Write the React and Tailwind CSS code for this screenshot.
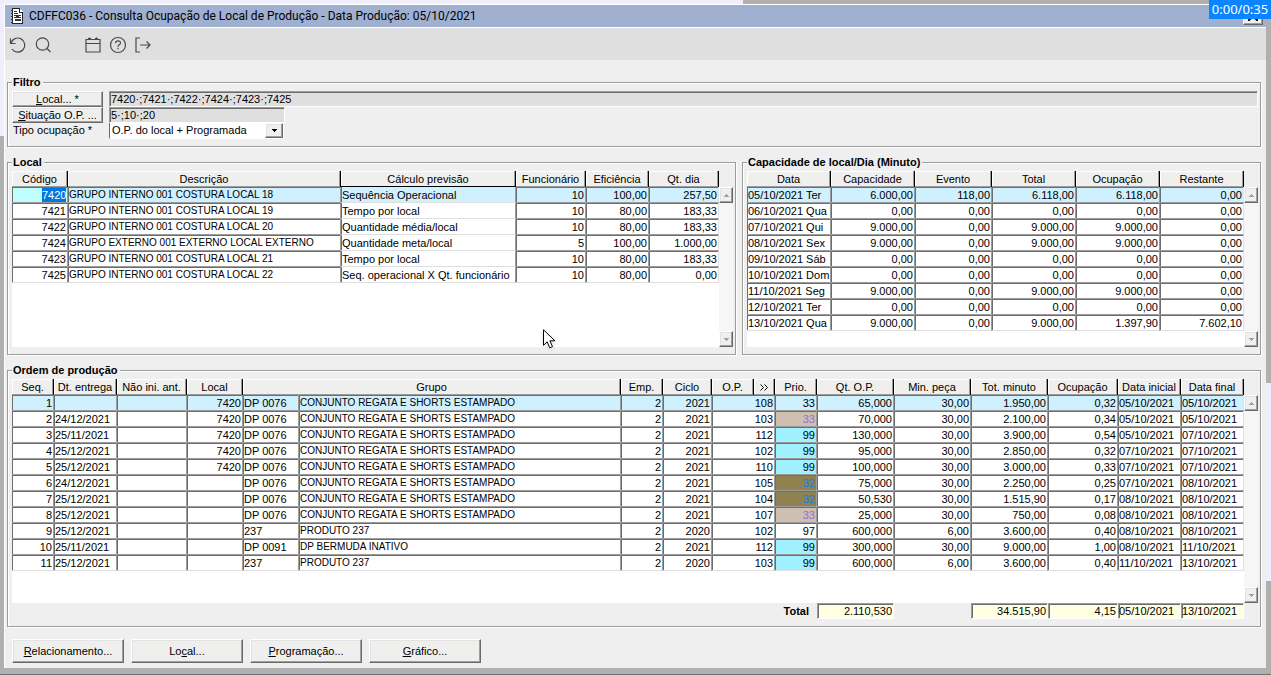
import React from 'react';
import clsx from 'clsx';

const locais = [
  ['7420', 'GRUPO INTERNO 001 COSTURA LOCAL 18', 'Sequência Operacional', '10', '100,00', '257,50'],
  ['7421', 'GRUPO INTERNO 001 COSTURA LOCAL 19', 'Tempo por local', '10', '80,00', '183,33'],
  ['7422', 'GRUPO INTERNO 001 COSTURA LOCAL 20', 'Quantidade média/local', '10', '80,00', '183,33'],
  ['7424', 'GRUPO EXTERNO 001 EXTERNO LOCAL EXTERNO', 'Quantidade meta/local', '5', '100,00', '1.000,00'],
  ['7423', 'GRUPO INTERNO 001 COSTURA LOCAL 21', 'Tempo por local', '10', '80,00', '183,33'],
  ['7425', 'GRUPO INTERNO 001 COSTURA LOCAL 22', 'Seq. operacional X Qt. funcionário', '10', '80,00', '0,00'],
];

const capacidades = [
  ['05/10/2021 Ter', '6.000,00', '118,00', '6.118,00', '6.118,00', '0,00'],
  ['06/10/2021 Qua', '0,00', '0,00', '0,00', '0,00', '0,00'],
  ['07/10/2021 Qui', '9.000,00', '0,00', '9.000,00', '9.000,00', '0,00'],
  ['08/10/2021 Sex', '9.000,00', '0,00', '9.000,00', '9.000,00', '0,00'],
  ['09/10/2021 Sáb', '0,00', '0,00', '0,00', '0,00', '0,00'],
  ['10/10/2021 Dom', '0,00', '0,00', '0,00', '0,00', '0,00'],
  ['11/10/2021 Seg', '9.000,00', '0,00', '9.000,00', '9.000,00', '0,00'],
  ['12/10/2021 Ter', '0,00', '0,00', '0,00', '0,00', '0,00'],
  ['13/10/2021 Qua', '9.000,00', '0,00', '9.000,00', '1.397,90', '7.602,10'],
];

const regata = 'CONJUNTO REGATA E SHORTS ESTAMPADO';

const ordens = [
  ['1', '', '', '7420', 'DP 0076', regata, '2', '2021', '108', '33', '65,000', '30,00', '1.950,00', '0,32', '05/10/2021', '05/10/2021'],
  ['2', '24/12/2021', '', '7420', 'DP 0076', regata, '2', '2021', '103', '33', '70,000', '30,00', '2.100,00', '0,34', '05/10/2021', '05/10/2021'],
  ['3', '25/11/2021', '', '7420', 'DP 0076', regata, '2', '2021', '112', '99', '130,000', '30,00', '3.900,00', '0,54', '05/10/2021', '07/10/2021'],
  ['4', '25/12/2021', '', '7420', 'DP 0076', regata, '2', '2021', '102', '99', '95,000', '30,00', '2.850,00', '0,32', '07/10/2021', '07/10/2021'],
  ['5', '25/12/2021', '', '7420', 'DP 0076', regata, '2', '2021', '110', '99', '100,000', '30,00', '3.000,00', '0,33', '07/10/2021', '07/10/2021'],
  ['6', '24/12/2021', '', '', 'DP 0076', regata, '2', '2021', '105', '32', '75,000', '30,00', '2.250,00', '0,25', '07/10/2021', '08/10/2021'],
  ['7', '25/12/2021', '', '', 'DP 0076', regata, '2', '2021', '104', '32', '50,530', '30,00', '1.515,90', '0,17', '08/10/2021', '08/10/2021'],
  ['8', '25/12/2021', '', '', 'DP 0076', regata, '2', '2021', '107', '33', '25,000', '30,00', '750,00', '0,08', '08/10/2021', '08/10/2021'],
  ['9', '25/12/2021', '', '', '237', 'PRODUTO 237', '2', '2020', '102', '97', '600,000', '6,00', '3.600,00', '0,40', '08/10/2021', '08/10/2021'],
  ['10', '25/11/2021', '', '', 'DP 0091', 'DP BERMUDA INATIVO', '2', '2021', '112', '99', '300,000', '30,00', '9.000,00', '1,00', '08/10/2021', '11/10/2021'],
  ['11', '25/12/2021', '', '', '237', 'PRODUTO 237', '2', '2020', '103', '99', '600,000', '6,00', '3.600,00', '0,40', '11/10/2021', '13/10/2021'],
];

// Cor da célula de prioridade
const prioridadeCores = {
  32: 'bg-[#8f8150] text-[#0a84e8]',
  33: 'bg-[#cfbfb0] text-[#9070d8]',
  99: 'bg-[#a0f0ff]',
};

const Group = ({ title, className, children }) => (
  <fieldset
    className={clsx(
      'min-w-0 border border-[#9c9c9c] pl-1 pr-0.5 pt-px pb-[7px] shadow-[1px_1px_0_#fff,inset_1px_1px_0_#fff]',
      className
    )}
  >
    <legend className="h-4 bg-[#efefef] pr-0.5 pl-px text-[11px] leading-4 font-bold">{title}</legend>
    {children}
  </fieldset>
);

const bevel =
  'border border-t-white border-l-white border-r-[#696969] border-b-[#696969] bg-[#efefee] shadow-[inset_-1px_-1px_0_#a0a0a0,inset_1px_1px_0_#e3e3e3]';

const sunken =
  'border border-t-[#9c9c9c] border-l-[#9c9c9c] border-r-white border-b-white shadow-[inset_1px_1px_0_#6d6d6d]';

const Arrow = ({ up, className }) => (
  <svg viewBox="0 0 5 3" className={clsx('h-[3px] w-[5px]', className)} fill="currentColor" shapeRendering="crispEdges">
    <path d={up ? 'M2 0h1v1h1v1h1v1H0V2h1V1h1z' : 'M0 0h5v1H4v1H3v1H2V2H1V1H0z'} />
  </svg>
);

const ScrollBar = () => (
  <div className="mt-4 flex w-[14px] shrink-0 flex-col justify-between bg-[#f6f6f6]">
    <button type="button" aria-label="Rolar para cima" className={clsx('flex h-4 w-full items-center justify-center', bevel)}>
      <Arrow up className="text-[#a0a0a0]" />
    </button>
    <button type="button" aria-label="Rolar para baixo" className={clsx('flex h-4 w-full items-center justify-center', bevel)}>
      <Arrow className="text-[#a0a0a0]" />
    </button>
  </div>
);

const Th = ({ children, colSpan, active }) => (
  <th
    scope="col"
    colSpan={colSpan}
    className={clsx(
      'h-4 overflow-hidden border-r border-r-black bg-[#efefee] p-0 text-center leading-4 font-normal whitespace-nowrap',
      active
        ? 'shadow-[inset_0_-1px_0_#000,inset_-1px_0_0_#9c9c9c,inset_1px_1px_0_#fff]'
        : 'shadow-[inset_-1px_-1px_0_#9c9c9c,inset_1px_1px_0_#fff]'
    )}
  >
    {children}
  </th>
);

const Td = ({ children, right, combo, colSpan, className }) => (
  <td
    colSpan={colSpan}
    className={clsx(
      'h-4 overflow-hidden border-r border-b border-r-[#9c9c9c] pt-px pb-0 leading-[14px] whitespace-nowrap last:border-r-[#dfdfdf]',
      right ? 'pr-px pl-0 text-right' : 'pr-0 pl-px',
      combo
        ? 'border-b-[#dfdfdf] shadow-[inset_1px_0_0_#6d6d6d]'
        : 'border-b-[#9c9c9c] shadow-[inset_1px_1px_0_#6d6d6d]',
      className
    )}
  >
    {children}
  </td>
);

const Grid = ({ className, children }) => (
  <div className="flex">
    <div className={clsx('min-w-0 flex-1 bg-[linear-gradient(#efefef_16px,#fff_16px)]', className)}>{children}</div>
    <ScrollBar />
  </div>
);

const tableClass = 'w-full table-fixed border-separate border-spacing-0 text-[11px]';

const rowClass = (i, last) =>
  clsx(i === 0 ? 'bg-[#cff0ff]' : 'bg-white', i === last && '[&>td]:border-b-[#dfdfdf]');

const LocalTable = () => (
  <Grid className="h-[176px]">
    <table className={tableClass}>
      <colgroup>
        <col className="w-[56px]" />
        <col />
        <col className="w-[175px]" />
        <col className="w-[70px]" />
        <col className="w-[63px]" />
        <col className="w-[70px]" />
      </colgroup>
      <thead>
        <tr>
          <Th>Código</Th>
          <Th>Descrição</Th>
          <Th active>Cálculo previsão</Th>
          <Th>Funcionário</Th>
          <Th>Eficiência</Th>
          <Th>Qt. dia</Th>
        </tr>
      </thead>
      <tbody>
        {locais.map((l, i) => (
          <tr key={l[0]} className={rowClass(i, locais.length - 1)}>
            <Td right className={i === 0 && 'bg-[#c0ffff]'}>
              {i === 0 ? <span className="block ml-auto w-6 bg-[#0078e0] text-white">{l[0]}</span> : l[0]}
            </Td>
            <Td className="text-[10px]">{l[1]}</Td>
            <Td combo>{l[2]}</Td>
            <Td right>{l[3]}</Td>
            <Td right>{l[4]}</Td>
            <Td right>{l[5]}</Td>
          </tr>
        ))}
      </tbody>
    </table>
  </Grid>
);

const CapacidadeTable = () => (
  <Grid className="h-[176px]">
    <table className={tableClass}>
      <colgroup>
        <col className="w-[84px]" />
        <col />
        <col className="w-[77px]" />
        <col className="w-[84px]" />
        <col className="w-[84px]" />
        <col className="w-[84px]" />
      </colgroup>
      <thead>
        <tr>
          {['Data', 'Capacidade', 'Evento', 'Total', 'Ocupação', 'Restante'].map((h) => (
            <Th key={h}>{h}</Th>
          ))}
        </tr>
      </thead>
      <tbody>
        {capacidades.map((c, i) => (
          <tr key={c[0]} className={rowClass(i, capacidades.length - 1)}>
            {c.map((v, j) => (
              <Td key={j} right={j > 0}>{v}</Td>
            ))}
          </tr>
        ))}
      </tbody>
    </table>
  </Grid>
);

const OrdemCols = () => (
  <colgroup>
    <col className="w-[42px]" />
    <col className="w-[63px]" />
    <col className="w-[70px]" />
    <col className="w-[56px]" />
    <col className="w-[56px]" />
    <col />
    <col className="w-[42px]" />
    <col className="w-[49px]" />
    <col className="w-[42px]" />
    <col className="w-[21px]" />
    <col className="w-[42px]" />
    <col className="w-[77px]" />
    <col className="w-[77px]" />
    <col className="w-[77px]" />
    <col className="w-[70px]" />
    <col className="w-[63px]" />
    <col className="w-[63px]" />
  </colgroup>
);

const alignLeft = [1, 2, 4, 5, 14, 15];

const OrdemTable = () => (
  <Grid className="h-[224px]">
    <table className={tableClass}>
      <OrdemCols />
      <thead>
        <tr>
          <Th>Seq.</Th>
          <Th>Dt. entrega</Th>
          <Th>Não ini. ant.</Th>
          <Th>Local</Th>
          <Th colSpan={2}>Grupo</Th>
          <Th>Emp.</Th>
          <Th>Ciclo</Th>
          <Th>O.P.</Th>
          <Th>
            <button type="button" aria-label="Expandir" className="flex h-[15px] w-full items-center justify-center">
              <svg viewBox="0 0 8 7" className="h-[7px] w-2" fill="none" stroke="#000">
                <path d="M.5.5l3 3-3 3M4.500.5l3 3-3 3" />
              </svg>
            </button>
          </Th>
          <Th>Prio.</Th>
          <Th>Qt. O.P.</Th>
          <Th>Min. peça</Th>
          <Th>Tot. minuto</Th>
          <Th>Ocupação</Th>
          <Th>Data inicial</Th>
          <Th>Data final</Th>
        </tr>
      </thead>
      <tbody>
        {ordens.map((o, i) => (
          <tr key={o[0]} className={rowClass(i, ordens.length - 1)}>
            {o.map((v, j) => (
              <Td
                key={j}
                right={!alignLeft.includes(j)}
                colSpan={j === 8 ? 2 : undefined}
                className={clsx(j === 5 && 'text-[10px]', j === 9 && i > 0 && prioridadeCores[v])}
              >
                {v}
              </Td>
            ))}
          </tr>
        ))}
      </tbody>
    </table>
  </Grid>
);

const TotalField = ({ label, value, right }) => (
  <td className="p-0">
    <input
      readOnly
      aria-label={label}
      value={value}
      className={clsx(
        'block h-4 w-full bg-[#ffffe1] leading-[14px] outline-none',
        sunken,
        right ? 'pr-px text-right' : 'pl-0'
      )}
    />
  </td>
);

const OrdemTotais = () => (
  <div className="pr-[14px]">
    <table className={tableClass}>
      <OrdemCols />
      <tbody>
        <tr>
          <th scope="row" colSpan={11} className="h-4 py-0 pr-2 pl-0 text-right leading-4 font-bold">
            Total
          </th>
          <TotalField label="Total Qt. O.P." value="2.110,530" right />
          <td className="p-0" />
          <TotalField label="Total Tot. minuto" value="34.515,90" right />
          <TotalField label="Total Ocupação" value="4,15" right />
          <TotalField label="Menor data inicial" value="05/10/2021" />
          <TotalField label="Maior data final" value="13/10/2021" />
        </tr>
      </tbody>
    </table>
  </div>
);

const ToolButton = ({ label, className, children }) => (
  <button type="button" aria-label={label} className={clsx('flex h-[25px] w-[25px] items-center justify-center', className)}>
    <svg viewBox="0 0 18 18" className="h-[18px] w-[18px]" fill="none" stroke="#4a4a4a" strokeWidth="1.200">
      {children}
    </svg>
  </button>
);

const TitleBar = () => (
  <header className="flex h-[23px] items-center border-b border-white bg-[#9fb0d0] pr-[3px] pl-[6px]">
    <svg viewBox="0 0 12 16" className="mr-[6px] h-4 w-3" shapeRendering="crispEdges">
      <path d="M1 0h7l4 4v12H1z" fill="#fff" />
      <path d="M1 0h8v1H2v14h9V5h1v11H1z" fill="#222" />
      <path d="M8 1h1v3h3v1H8z" fill="#222" />
      <path d="M3 3h3v1H3zM3 5h4v1H3zM3 7h7v1H3zM3 9h3v1H3zM5 8h3v2H5zM7 9h3v1H7zM4 11h6v2H4zM0 2h2v1H0zM0 5h2v1H0zM0 8h2v1H0zM0 11h2v1H0zM0 14h2v1H0z" fill="#333" />
    </svg>
    <h1 className="flex-1 font-['Roboto',sans-serif] text-[12px] leading-4">
      CDFFC036 - Consulta Ocupação de Local de Produção - Data Produção: 05/10/2021
    </h1>
    <button type="button" aria-label="Fechar" className={clsx('flex h-[18px] w-5 items-center justify-center', bevel)}>
      <svg viewBox="0 0 10 10" className="h-[10px] w-[10px]" stroke="#000" strokeWidth="2">
        <path d="M0 0l10 10M10 0L0 10" />
      </svg>
    </button>
  </header>
);

const Toolbar = () => (
  <div className="flex h-8 items-center bg-[#dfdfdf] pt-0.5">
    <ToolButton label="Limpar">
      <path d="M1.500 2.500v5h5M2 7.300A7 7 0 1 1 3 13" />
    </ToolButton>
    <ToolButton label="Pesquisar" className="mr-[25px]">
      <circle cx="8.500" cy="8" r="6.200" />
      <path d="M13 12.500l3.500 3.500" />
    </ToolButton>
    <ToolButton label="Calendário">
      <path d="M2 3.500h14v12.500H2zM2 7.500h14M5.500 1.500v2M12.500 1.500v2M4 2.500h3M11 2.500h3" />
    </ToolButton>
    <ToolButton label="Ajuda">
      <circle cx="9" cy="9" r="7.500" />
      <path d="M6.500 7.300c0-3.300 5-3.300 5-.3 0 2-2.500 1.700-2.500 3.700M9 11.700v1.600" />
    </ToolButton>
    <ToolButton label="Sair">
      <path d="M6 2H2v14h4M6 9h10M12.500 5.500L16 9l-3.500 3.500" />
    </ToolButton>
  </div>
);

const Filtro = () => (
  <Group title="Filtro">
    <div className="grid grid-cols-[91px_1fr] gap-x-[6px] text-[11px]">
      <button type="button" className={clsx('h-4 leading-[14px]', bevel)}>
        <u>L</u>ocal... *
      </button>
      <input
        readOnly
        aria-label="Local"
        value="7420·;7421·;7422·;7424·;7423·;7425"
        className={clsx('h-4 w-full min-w-0 bg-[#dfdfdf] pl-px leading-[14px] outline-none', sunken)}
      />
      <button type="button" className={clsx('h-4 leading-[14px]', bevel)}>
        <u>S</u>ituação O.P. ...
      </button>
      <input
        readOnly
        aria-label="Situação O.P."
        value="5·;10·;20"
        className={clsx('h-4 w-[176px] bg-[#dfdfdf] pl-px leading-[14px] outline-none', sunken)}
      />
      <label htmlFor="tipo" className="pl-px leading-[15px]">
        Tipo ocupação *
      </label>
      <div className="flex h-4 w-[175px] border-r border-b border-l border-r-white border-b-white border-l-[#6d6d6d] bg-white">
        <select id="tipo" className="min-w-0 flex-1 appearance-none bg-white pl-0.5 leading-[15px] outline-none">
          <option>O.P. do local + Programada</option>
        </select>
        <span className={clsx('flex h-[15px] w-[18px] items-center justify-center', bevel)}>
          <Arrow />
        </span>
      </div>
    </div>
  </Group>
);

const actionClass = clsx('h-6 w-28 text-[11px] leading-5', bevel);

const Actions = () => (
  <div className="mt-[5px] flex gap-[7px] pl-[5px]">
    <button type="button" className={actionClass}>
      <u>R</u>elacionamento...
    </button>
    <button type="button" className={actionClass}>
      Lo<u>c</u>al...
    </button>
    <button type="button" className={actionClass}>
      <u>P</u>rogramação...
    </button>
    <button type="button" className={actionClass}>
      <u>G</u>ráfico...
    </button>
  </div>
);

const App = () => (
  <div className="relative flex min-h-screen flex-col bg-[#b0b0b0] font-['Liberation_Sans',Arial,sans-serif] text-black">
    <div className="h-1 w-[743px] bg-[#eeeefc]" />
    <div className="flex flex-1">
      <div className="w-[4px] shrink-0">
        <div className="h-[132px] bg-[#eeeefc]" />
      </div>
      <div className="flex min-w-0 flex-1 flex-col border-t border-l border-white bg-[#efefef]">
        <TitleBar />
        <Toolbar />
        <main className="flex flex-col gap-[7px] pt-[14px] pr-[5px] pb-[5px] pl-0.5">
          <Filtro />
          <div className="flex gap-[6px]">
            <Group title="Local" className="flex-1">
              <LocalTable />
            </Group>
            <Group title="Capacidade de local/Dia (Minuto)" className="w-[519px]">
              <CapacidadeTable />
            </Group>
          </div>
          <Group title="Ordem de produção">
            <OrdemTable />
            <OrdemTotais />
          </Group>
          <Actions />
        </main>
      </div>
      <div className="w-[5px] shrink-0 pt-[379px]">
        <div className="h-[198px] bg-[#eeeefc]" />
      </div>
    </div>
    <div className="h-[7px] border-b border-[#707070]" />

    {/* Contador da gravação */}
    <div className="absolute top-0 right-0 h-[19px] w-[62px] bg-[#0a84ff] text-center font-['Noto_Sans',sans-serif] text-[13px] leading-[19px] text-white">
      0:00/0:35
    </div>
    {/* Ponteiro do mouse */}
    <svg viewBox="0 0 13 20" className="absolute top-[329px] left-[543px] h-5 w-[13px] drop-shadow-sm">
      <path d="M.5.800v15.500l3.700-3.500 2.600 6 2.700-1.200-2.600-5.800h5z" fill="#fff" stroke="#000" />
    </svg>
  </div>
);

export default App;
